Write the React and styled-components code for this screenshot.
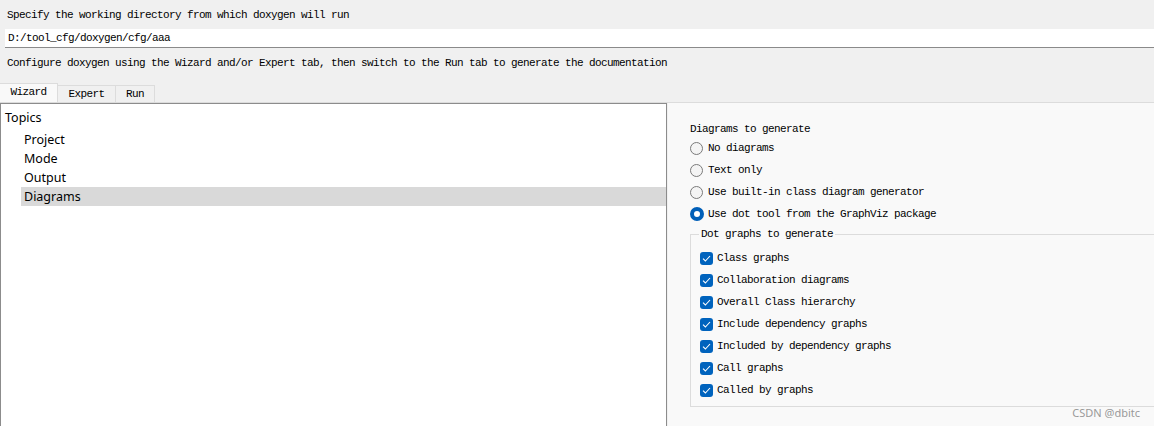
import React from "react";
import styled, { createGlobalStyle } from "styled-components";

const GlobalStyle = createGlobalStyle`
  html, body {
    margin: 0;
    padding: 0;
    background: #f0f0f0;
  }
  body {
    width: 1154px;
    height: 426px;
    overflow: hidden;
  }
`;

const mono = `"Liberation Mono", "Noto Sans CJK SC", monospace`;
const sans = `"Noto Sans", "Open Sans", sans-serif`;

const topics = ["Project", "Mode", "Output", "Diagrams"];
const radios = [
  { label: "No diagrams", checked: false },
  { label: "Text only", checked: false },
  { label: "Use built-in class diagram generator", checked: false },
  { label: "Use dot tool from the GraphViz package", checked: true },
];
const graphs = [
  "Class graphs",
  "Collaboration diagrams",
  "Overall Class hierarchy",
  "Include dependency graphs",
  "Included by dependency graphs",
  "Call graphs",
  "Called by graphs",
];

function App() {
  return (
    <Page>
      <GlobalStyle />
      <Label $top={8}>Specify the working directory from which doxygen will run</Label>
      <DirInput>D:/tool_cfg/doxygen/cfg/aaa</DirInput>
      <Label $top={8}>
        Configure doxygen using the Wizard and/or Expert tab, then switch to the Run tab to generate the documentation
      </Label>
      <TabBar>
        <Tab $active $w={58}>Wizard</Tab>
        <Tab $w={59}>Expert</Tab>
        <Tab $w={40}>Run</Tab>
      </TabBar>
      <Body>
        <TreePanel>
          <TreeTitle>Topics</TreeTitle>
          <TreeList>
            {topics.map((t) => (
              <TreeItem key={t} $selected={t === "Diagrams"}>
                {t}
              </TreeItem>
            ))}
          </TreeList>
        </TreePanel>
        <Gutter />
        <Settings>
          <SectionTitle>Diagrams to generate</SectionTitle>
          <RadioList>
            {radios.map((r) => (
              <OptionRow key={r.label}>
                <Radio $checked={r.checked} />
                <OptionText>{r.label}</OptionText>
              </OptionRow>
            ))}
          </RadioList>
          <GroupBox>
            <GroupTitle>Dot graphs to generate</GroupTitle>
            {graphs.map((g) => (
              <OptionRow key={g} $check>
                <CheckBox>
                  <svg width="9" height="7" viewBox="0 0 9 7">
                    <path d="M1 3.6 L3.4 6 L8 1" fill="none" stroke="#ffffff" strokeWidth="1.1" />
                  </svg>
                </CheckBox>
                <OptionText>{g}</OptionText>
              </OptionRow>
            ))}
          </GroupBox>
          <Watermark>CSDN @dbitc</Watermark>
        </Settings>
      </Body>
    </Page>
  );
}

export default App;

const Page = styled.div`
  width: 1154px;
  height: 426px;
  display: flex;
  flex-direction: column;
  background: #f0f0f0;
  overflow: hidden;
`;

const Label = styled.div`
  padding: ${(p) => p.$top}px 0 0 7px;
  height: 14px;
  font-family: ${mono};
  font-size: 11px;
  letter-spacing: -0.6px;
  line-height: 14px;
  color: #000;
  white-space: nowrap;
`;

const DirInput = styled.div`
  margin: 7px 0 0 5px;
  height: 18px;
  padding-left: 3px;
  background: #ffffff;
  border-bottom: 1px solid #8a8a8a;
  font-family: ${mono};
  font-size: 11px;
  letter-spacing: -0.6px;
  line-height: 18px;
  color: #000;
`;

const TabBar = styled.div`
  display: flex;
  margin-top: 13px;
  height: 19px;
  border-bottom: 1px solid #dcdcdc;
`;

const Tab = styled.div`
  width: ${(p) => p.$w}px;
  box-sizing: border-box;
  text-align: center;
  height: ${(p) => (p.$active ? 19 : 17)}px;
  margin-top: ${(p) => (p.$active ? 0 : 2)}px;
  background: ${(p) => (p.$active ? "#f9f9f9" : "#f0f0f0")};
  border: 1px solid #dcdcdc;
  border-bottom: none;
  border-left: ${(p) => (p.$active ? "none" : "1px solid #dcdcdc")};
  margin-left: ${(p) => (p.$active ? 0 : -1)}px;
  font-family: ${mono};
  font-size: 11px;
  letter-spacing: -0.6px;
  line-height: ${(p) => (p.$active ? 17 : 16)}px;
  color: #000;
`;

const Body = styled.div`
  flex: 1;
  display: flex;
  min-height: 0;
`;

const TreePanel = styled.div`
  width: 667px;
  background: #ffffff;
  border: 1px solid #8c8c8c;
  border-bottom: none;
  padding-top: 4px;
  box-sizing: border-box;
  font-family: ${sans};
  font-size: 12.5px;
  color: #000;
`;

const TreeTitle = styled.div`
  height: 19px;
  line-height: 19px;
  padding-left: 4px;
`;

const TreeList = styled.div`
  margin-top: 3px;
`;

const TreeItem = styled.div`
  height: 19px;
  line-height: 19px;
  margin-left: 20px;
  padding-left: 3px;
  background: ${(p) => (p.$selected ? "#d9d9d9" : "transparent")};
`;

const Gutter = styled.div`
  width: 1px;
  background: #f0f0f0;
`;

const Settings = styled.div`
  flex: 1;
  position: relative;
  background: #f9f9f9;
  padding: 19px 0 0 22px;
  display: flex;
  flex-direction: column;
`;

const SectionTitle = styled.div`
  height: 14px;
  line-height: 14px;
  font-family: ${mono};
  font-size: 11px;
  letter-spacing: -0.6px;
  color: #000;
`;

const RadioList = styled.div`
  display: flex;
  flex-direction: column;
  margin-top: 1px;
`;

const OptionRow = styled.div`
  display: flex;
  align-items: center;
  height: 22px;
  gap: ${(p) => (p.$check ? 4 : 5)}px;
`;

const Radio = styled.span`
  width: ${(p) => (p.$checked ? 14 : 13)}px;
  height: ${(p) => (p.$checked ? 14 : 13)}px;
  border-radius: 50%;
  box-sizing: border-box;
  flex-shrink: 0;
  background: ${(p) => (p.$checked ? "#ffffff" : "#f4f4f4")};
  border: ${(p) => (p.$checked ? "4px solid #005fb8" : "1px solid #7a7a7a")};
  margin-right: ${(p) => (p.$checked ? -1 : 0)}px;
`;

const OptionText = styled.span`
  font-family: ${mono};
  font-size: 11px;
  letter-spacing: -0.6px;
  color: #000;
  white-space: nowrap;
`;

const GroupBox = styled.div`
  position: relative;
  margin-top: 9px;
  border: 1px solid #dcdcdc;
  border-right: none;
  padding: 12px 0 0 9px;
  height: 173px;
  box-sizing: border-box;
`;

const GroupTitle = styled.div`
  position: absolute;
  top: -8px;
  left: 8px;
  padding: 0 2px;
  background: #f9f9f9;
  line-height: 14px;
  font-family: ${mono};
  font-size: 11px;
  letter-spacing: -0.6px;
  color: #000;
`;

const CheckBox = styled.span`
  width: 13px;
  height: 13px;
  border-radius: 3px;
  background: #0063bd;
  display: flex;
  align-items: center;
  justify-content: center;
  flex-shrink: 0;
`;

const Watermark = styled.div`
  position: absolute;
  right: 14px;
  bottom: 6px;
  font-family: ${sans};
  font-size: 11px;
  color: #9a9a9a;
`;
